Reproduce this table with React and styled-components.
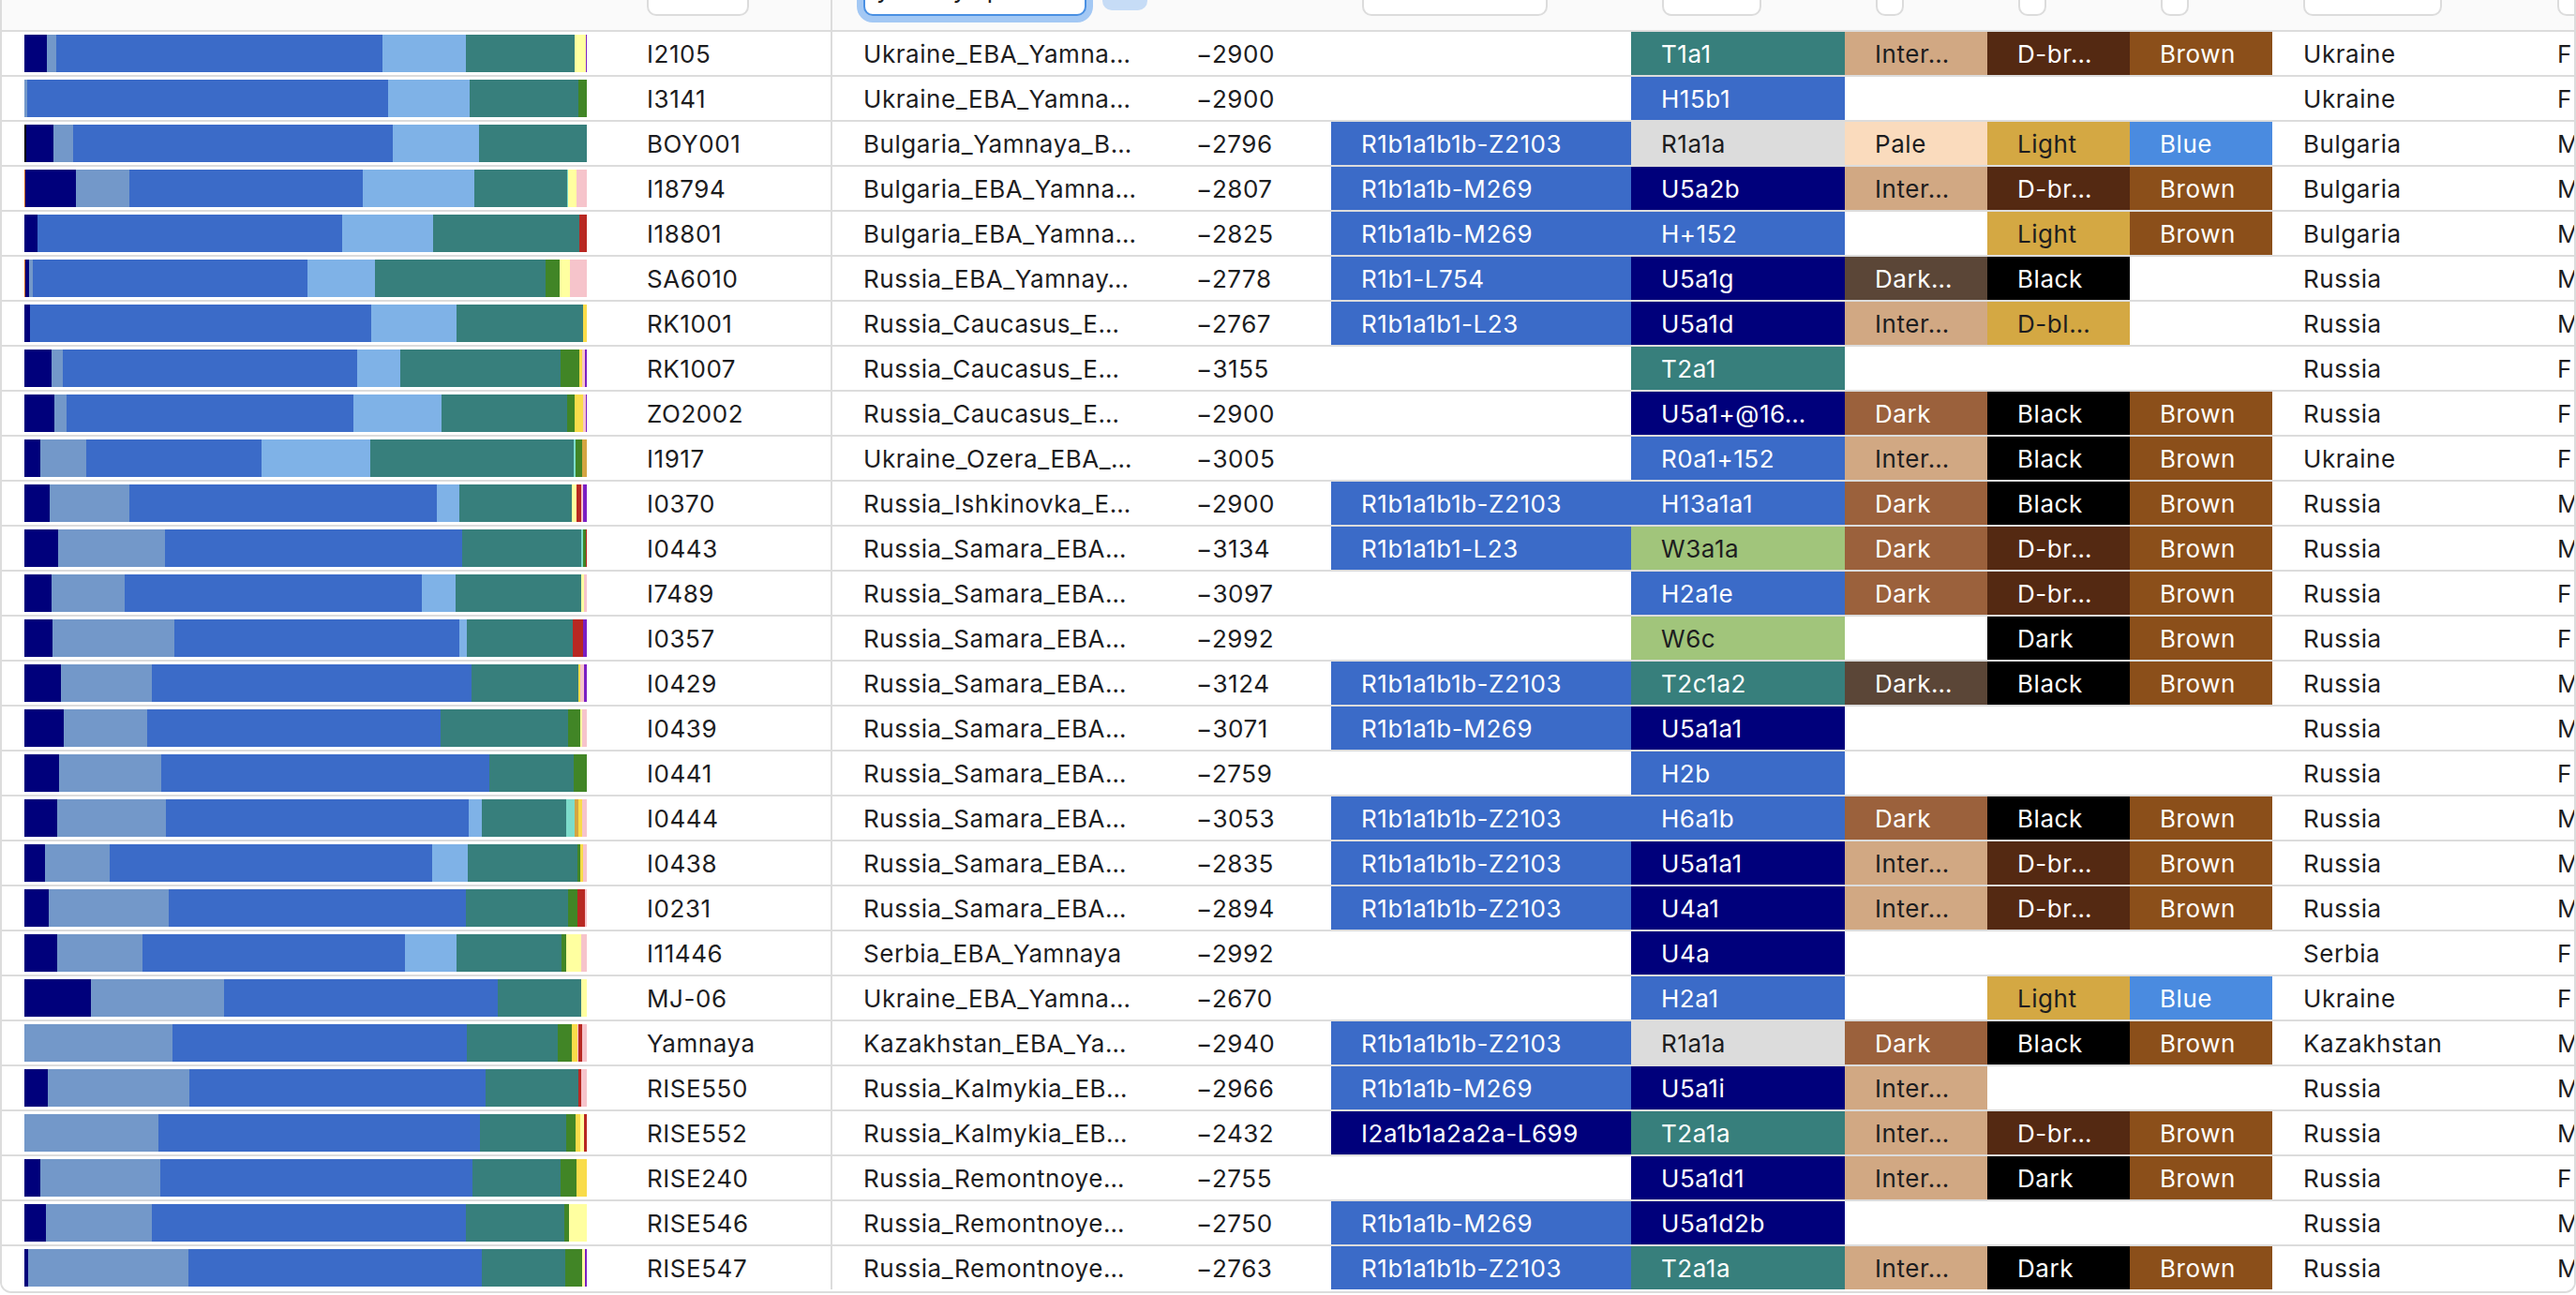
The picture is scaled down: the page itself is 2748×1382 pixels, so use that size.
import React from "react";
import styled, { createGlobalStyle } from "styled-components";

const GlobalStyle = createGlobalStyle`
  html, body {
    margin: 0;
    padding: 0;
    background: #fff;
  }
  body {
    font-family: Inter, "Liberation Sans", sans-serif;
    color: #1d1d1f;
    overflow: hidden;
  }
  * {
    box-sizing: border-box;
  }
`;

const COLUMNS =
  "655px 231px 359px 173px 320px 228px 152px 152px 152px 271px 120px";

// ancestry components in the bar
const SEGMENT_COLORS = {
  n: "#00007b",
  s: "#7398c9",
  r: "#3b6bc8",
  l: "#7fb2e7",
  t: "#377f7c",
  g: "#418526",
  y: "#ffffa0",
  Y: "#f9dc4a",
  k: "#f6c4cb",
  R: "#b82822",
  p: "#7a1fc4",
  c: "#7ddccb",
  o: "#d4a542",
  b: "#000000",
  x: "#c86420",
};

// fills for the haplogroup / phenotype cells
const CELL_COLORS = {
  teal: ["#377f7c", "#fff"],
  royal: ["#3b6bc8", "#fff"],
  navy: ["#00007b", "#fff"],
  gray: ["#dcdcdc", "#1d1d1f"],
  lgreen: ["#a1c57b", "#1d1d1f"],
  tan: ["#d1a883", "#1d1d1f"],
  pale: ["#fadbbd", "#1d1d1f"],
  dbrown: ["#542912", "#fff"],
  brown: ["#8b4f1a", "#fff"],
  gold: ["#d4a843", "#1d1d1f"],
  blue: ["#4a8be0", "#fff"],
  mbrown: ["#9b613c", "#fff"],
  dgray: ["#5b4637", "#fff"],
  black: ["#000000", "#fff"],
};

const samples = [
  ["I2105", "Ukraine_EBA_Yamna…", "−2900", "", "T1a1|teal", "Inter…|tan", "D-br…|dbrown", "Brown|brown", "Ukraine", "F", "n57 s24 r826 l212 t275 y28 p3"],
  ["I3141", "Ukraine_EBA_Yamna…", "−2900", "", "H15b1|royal", "", "", "", "Ukraine", "F", "s7 r915 l206 t275 g22"],
  ["BOY001", "Bulgaria_Yamnaya_B…", "−2796", "R1b1a1b1b-Z2103|royal", "R1a1a|gray", "Pale|pale", "Light|gold", "Blue|blue", "Bulgaria", "M", "b4 n69 s50 r810 l219 t273"],
  ["I18794", "Bulgaria_EBA_Yamna…", "−2807", "R1b1a1b-M269|royal", "U5a2b|navy", "Inter…|tan", "D-br…|dbrown", "Brown|brown", "Bulgaria", "M", "x2 n128 s136 r591 l283 t235 c3 y21 k26"],
  ["I18801", "Bulgaria_EBA_Yamna…", "−2825", "R1b1a1b-M269|royal", "H+152|royal", "", "Light|gold", "Brown|brown", "Bulgaria", "M", "n33 r772 l231 t370 R19"],
  ["SA6010", "Russia_EBA_Yamnay…", "−2778", "R1b1-L754|royal", "U5a1g|navy", "Dark…|dgray", "Black|black", "", "Russia", "M", "x2 n10 s9 r696 l171 t433 g35 y26 k43"],
  ["RK1001", "Russia_Caucasus_E…", "−2767", "R1b1a1b1-L23|royal", "U5a1d|navy", "Inter…|tan", "D-bl…|gold", "", "Russia", "M", "n14 r865 l216 t321 Y9"],
  ["RK1007", "Russia_Caucasus_E…", "−3155", "", "T2a1|teal", "", "", "", "Russia", "F", "n69 s28 r746 l109 t407 g47 Y6 k7 p6"],
  ["ZO2002", "Russia_Caucasus_E…", "−2900", "", "U5a1+@16…|navy", "Dark|mbrown", "Black|black", "Brown|brown", "Russia", "F", "b1 n75 s31 r727 l223 t318 g19 Y22 k6 p3"],
  ["I1917", "Ukraine_Ozera_EBA_…", "−3005", "", "R0a1+152|royal", "Inter…|tan", "Black|black", "Brown|brown", "Ukraine", "F", "b1 n39 s117 r444 l275 t516 c5 g16 o12"],
  ["I0370", "Russia_Ishkinovka_E…", "−2900", "R1b1a1b1b-Z2103|royal", "H13a1a1|royal", "Dark|mbrown", "Black|black", "Brown|brown", "Russia", "M", "n64 s202 r779 l57 t285 y12 R12 k5 p9"],
  ["I0443", "Russia_Samara_EBA…", "−3134", "R1b1a1b1-L23|royal", "W3a1a|lgreen", "Dark|mbrown", "D-br…|dbrown", "Brown|brown", "Russia", "M", "n85 s271 r753 t302 c5 g7 R2"],
  ["I7489", "Russia_Samara_EBA…", "−3097", "", "H2a1e|royal", "Dark|mbrown", "D-br…|dbrown", "Brown|brown", "Russia", "F", "b1 n68 s185 r753 l86 t318 y7 k7"],
  ["I0357", "Russia_Samara_EBA…", "−2992", "", "W6c|lgreen", "", "Dark|black", "Brown|brown", "Russia", "F", "n71 s309 r722 l19 t269 R26 p9"],
  ["I0429", "Russia_Samara_EBA…", "−3124", "R1b1a1b1b-Z2103|royal", "T2c1a2|teal", "Dark…|dgray", "Black|black", "Brown|brown", "Russia", "M", "n92 s231 r809 t272 Y5 k10 p6"],
  ["I0439", "Russia_Samara_EBA…", "−3071", "R1b1a1b-M269|royal", "U5a1a1|navy", "", "", "", "Russia", "M", "n100 s211 r744 t323 g31 y4 k12"],
  ["I0441", "Russia_Samara_EBA…", "−2759", "", "H2b|royal", "", "", "", "Russia", "F", "n88 s259 r831 t214 g33"],
  ["I0444", "Russia_Samara_EBA…", "−3053", "R1b1a1b1b-Z2103|royal", "H6a1b|royal", "Dark|mbrown", "Black|black", "Brown|brown", "Russia", "M", "n83 s276 r767 l33 t214 c21 o10 Y9 k12"],
  ["I0438", "Russia_Samara_EBA…", "−2835", "R1b1a1b1b-Z2103|royal", "U5a1a1|navy", "Inter…|tan", "D-br…|dbrown", "Brown|brown", "Russia", "M", "n52 s164 r817 l91 t277 g8 Y7 k9"],
  ["I0231", "Russia_Samara_EBA…", "−2894", "R1b1a1b1b-Z2103|royal", "U4a1|navy", "Inter…|tan", "D-br…|dbrown", "Brown|brown", "Russia", "M", "n62 s304 r753 t258 g24 R19 k5"],
  ["I11446", "Serbia_EBA_Yamnaya", "−2992", "", "U4a|navy", "", "", "", "Serbia", "F", "n83 s216 r665 l131 t266 g12 y38 k14"],
  ["MJ-06", "Ukraine_EBA_Yamna…", "−2670", "", "H2a1|royal", "", "Light|gold", "Blue|blue", "Ukraine", "F", "n168 s338 r694 t211 y14"],
  ["Yamnaya", "Kazakhstan_EBA_Ya…", "−2940", "R1b1a1b1b-Z2103|royal", "R1a1a|gray", "Dark|mbrown", "Black|black", "Brown|brown", "Kazakhstan", "M", "s375 r746 t231 g35 Y14 k3 R9 k12"],
  ["RISE550", "Russia_Kalmykia_EB…", "−2966", "R1b1a1b-M269|royal", "U5a1i|navy", "Inter…|tan", "", "", "Russia", "M", "n59 s359 r751 t235 R7 k14"],
  ["RISE552", "Russia_Kalmykia_EB…", "−2432", "I2a1b1a2a2a-L699|navy", "T2a1a|teal", "Inter…|tan", "D-br…|dbrown", "Brown|brown", "Russia", "M", "s340 r814 t219 g24 Y12 y9 R7"],
  ["RISE240", "Russia_Remontnoye…", "−2755", "", "U5a1d1|navy", "Inter…|tan", "Dark|black", "Brown|brown", "Russia", "F", "n40 s304 r791 t224 g40 Y26"],
  ["RISE546", "Russia_Remontnoye…", "−2750", "R1b1a1b-M269|royal", "U5a1d2b|navy", "", "", "", "Russia", "M", "n54 s269 r796 t249 g12 y45"],
  ["RISE547", "Russia_Remontnoye…", "−2763", "R1b1a1b1b-Z2103|royal", "T2a1a|teal", "Inter…|tan", "Dark|black", "Brown|brown", "Russia", "M", "n9 s407 r741 t211 g43 y7 p5"],
];

const parseBar = (spec) =>
  spec.split(" ").map((part) => ({
    color: SEGMENT_COLORS[part[0]],
    size: Number(part.slice(1)),
  }));

const AncestryBar = ({ spec }) => (
  <Bar>
    {parseBar(spec).map((seg, i) => (
      <Segment key={i} $color={seg.color} style={{ flexGrow: seg.size }} />
    ))}
  </Bar>
);

const Swatch = ({ value }) => {
  if (!value) return <Cell />;
  const [label, key] = value.split("|");
  const [bg, fg] = CELL_COLORS[key];
  return (
    <FilledCell $bg={bg} $fg={fg}>
      {label}
    </FilledCell>
  );
};

const App = () => {
  return (
    <>
      <GlobalStyle />
      <Frame>
        <Grid>
          <HeaderRow>
            <HeaderCell />
            <HeaderCell $divider>
              <FilterInput $width={109} readOnly value="" />
            </HeaderCell>
            <HeaderCell>
              <SearchInput readOnly value="yamnaya p" />
              <ClearButton />
            </HeaderCell>
            <HeaderCell />
            <HeaderCell>
              <FilterInput $width={198} readOnly value="" />
            </HeaderCell>
            <HeaderCell>
              <FilterInput $width={106} readOnly value="" />
            </HeaderCell>
            <HeaderCell>
              <FilterInput $width={30} readOnly value="" />
            </HeaderCell>
            <HeaderCell>
              <FilterInput $width={30} readOnly value="" />
            </HeaderCell>
            <HeaderCell>
              <FilterInput $width={30} readOnly value="" />
            </HeaderCell>
            <HeaderCell>
              <FilterInput $width={148} readOnly value="" />
            </HeaderCell>
            <HeaderCell>
              <FilterInput $width={110} readOnly value="" />
            </HeaderCell>
          </HeaderRow>

          {samples.map((s) => (
            <Row key={s[0]}>
              <BarCell>
                <AncestryBar spec={s[10]} />
              </BarCell>
              <Cell $divider>{s[0]}</Cell>
              <Cell>{s[1]}</Cell>
              <Cell $tight>{s[2]}</Cell>
              <Swatch value={s[3]} />
              <Swatch value={s[4]} />
              <Swatch value={s[5]} />
              <Swatch value={s[6]} />
              <Swatch value={s[7]} />
              <Cell>{s[8]}</Cell>
              <Cell>{s[9]}</Cell>
            </Row>
          ))}
        </Grid>
      </Frame>
    </>
  );
};

const Frame = styled.div`
  width: 100%;
  height: 1380px;
  overflow: hidden;
  border: 2px solid #dcdcdc;
  border-top: none;
  border-radius: 0 0 12px 12px;
`;

const Grid = styled.div`
  width: max-content;
  font-size: 26px;
  letter-spacing: 0.55px;
`;

const HeaderRow = styled.div`
  display: grid;
  grid-template-columns: ${COLUMNS};
  grid-template-rows: 32px;
  height: 34px;
  background: #fafafa;
  border-bottom: 2px solid #dcdcdc;
`;

const HeaderCell = styled.div`
  display: flex;
  align-items: flex-end;
  gap: 17px;
  height: 32px;
  overflow: hidden;
  padding: 0 0 15px 33px;
  border-right: ${(p) => (p.$divider ? "2px solid #dcdcdc" : "none")};
`;

const FilterInput = styled.input`
  flex: none;
  width: ${(p) => p.$width}px;
  height: 58px;
  padding: 0 12px;
  border: 2px solid #dcdcdc;
  border-radius: 10px;
  background: #fff;
  font: inherit;
  outline: none;
`;

const SearchInput = styled.input`
  flex: none;
  width: 238px;
  height: 58px;
  padding: 0 12px;
  border: 2px solid #4a90e2;
  border-radius: 10px;
  background: #fff;
  box-shadow: 0 0 0 7px #a3c8f4;
  font: inherit;
  color: #1d1d1f;
  outline: none;
`;

const ClearButton = styled.div`
  flex: none;
  width: 48px;
  height: 48px;
  margin-bottom: 6px;
  border-radius: 10px;
  background: #c6dcf6;
`;

const Row = styled.div`
  display: grid;
  grid-template-columns: ${COLUMNS};
  grid-template-rows: 46px;
  height: 48px;
  background: #fff;
  border-bottom: 2px solid #dcdcdc;

  &:last-child {
    border-bottom: none;
  }
`;

const BarCell = styled.div`
  display: flex;
  align-items: center;
  padding-left: 24px;
`;

const Bar = styled.div`
  display: flex;
  width: 600px;
  height: 40px;
`;

const Segment = styled.div`
  flex-basis: 0;
  flex-shrink: 0;
  min-width: 0;
  background: ${(p) => p.$color};
`;

const Cell = styled.div`
  display: flex;
  align-items: center;
  min-width: 0;
  padding-left: ${(p) => (p.$tight ? "29px" : "33px")};
  white-space: nowrap;
  overflow: hidden;
  color: #1d1d1f;
  border-right: ${(p) => (p.$divider ? "2px solid #dcdcdc" : "none")};
`;

const FilledCell = styled(Cell)`
  padding-left: 32px;
  background: ${(p) => p.$bg};
  color: ${(p) => p.$fg};
`;

export default App;
